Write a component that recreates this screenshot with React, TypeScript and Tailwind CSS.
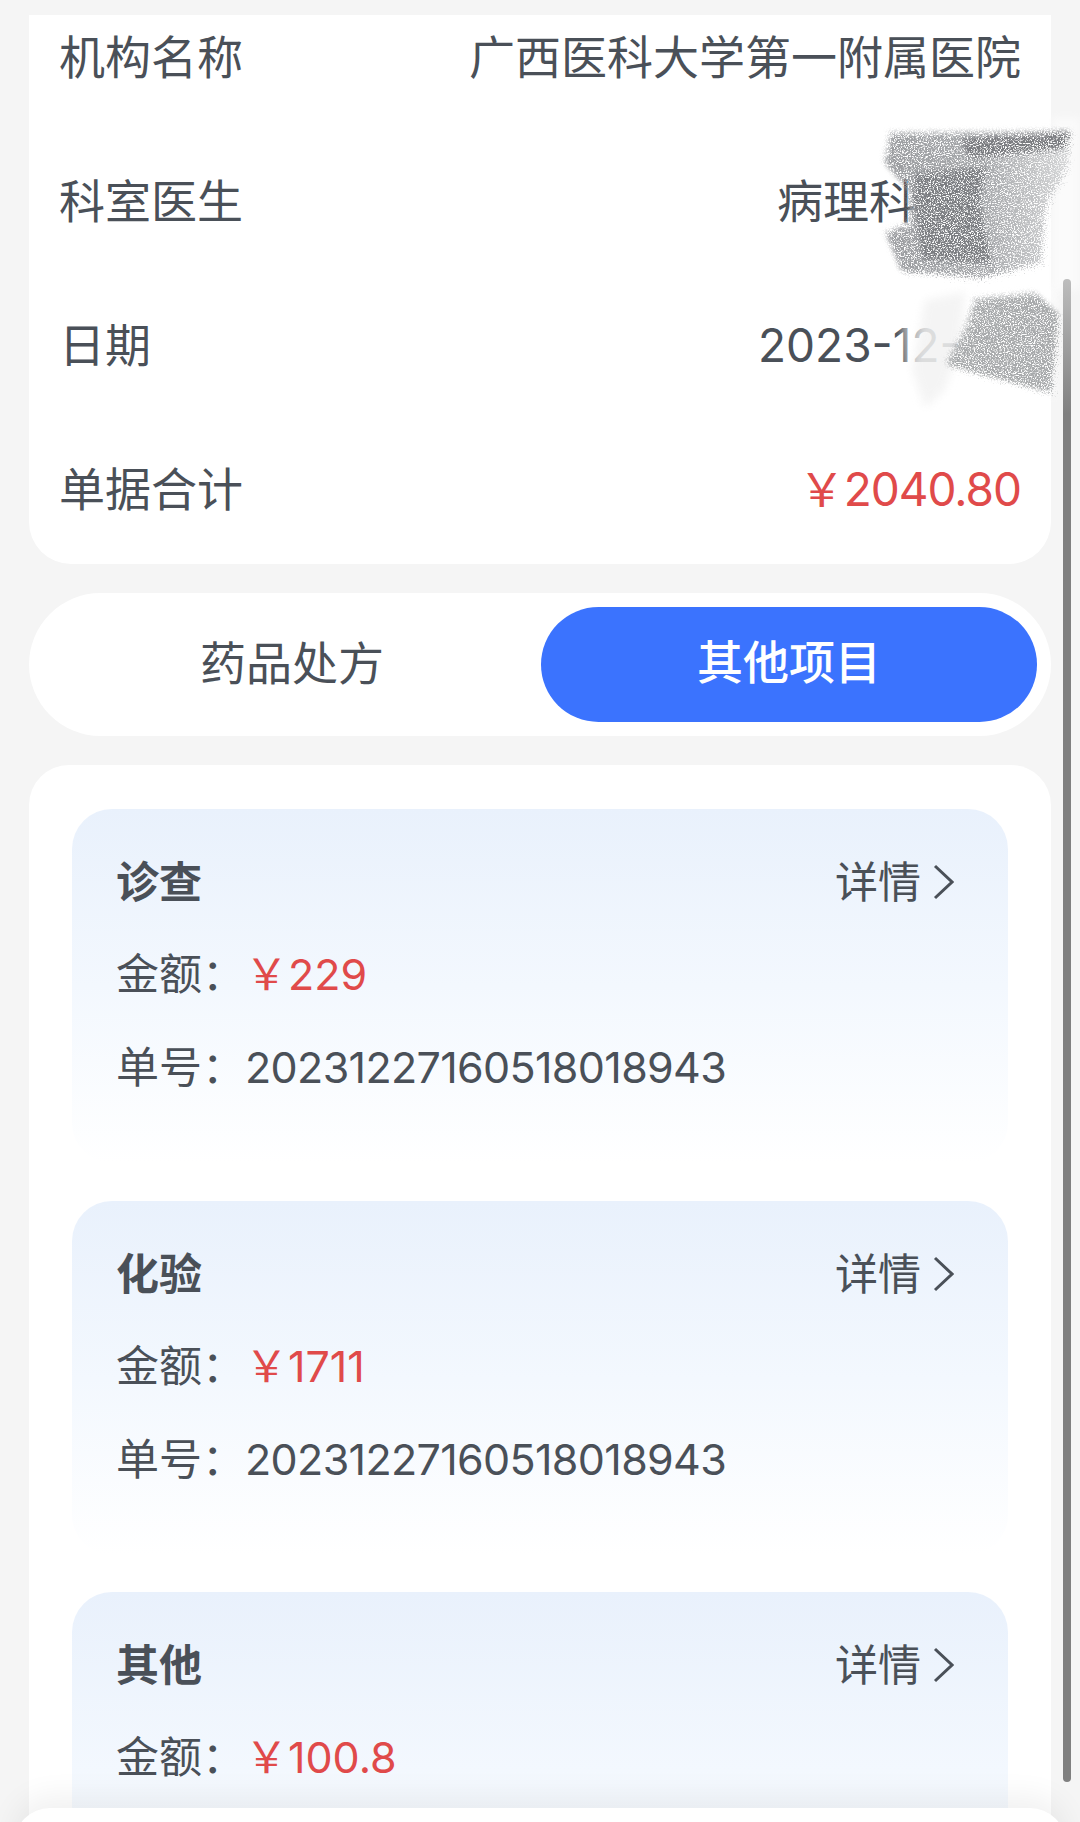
const infoRows = [
  { label: '机构名称', value: '广西医科大学第一附属医院' },
  { label: '科室医生', value: '病理科', valueClass: 'w-[244px]' },
  { label: '日期', value: '2023-12-', valueClass: 'w-[263px]' },
]

const items = [
  { title: '诊查', amount: '229', number: '20231227160518018943' },
  { title: '化验', amount: '1711', number: '20231227160518018943' },
  { title: '其他', amount: '100.8' },
]

function Scribble() {
  return (
    <svg className="pointer-events-none absolute left-[860px] top-[110px]" width="220" height="320" viewBox="860 110 220 320">
      <defs>
        <linearGradient id="fade" x1="0" y1="0" x2="1" y2="0">
          <stop offset="0" stopColor="#9a9c9f" />
          <stop offset="0.55" stopColor="#a8aaad" />
          <stop offset="1" stopColor="#d6d7d8" />
        </linearGradient>
        <filter id="pencil" x="-10%" y="-10%" width="120%" height="120%">
          <feGaussianBlur in="SourceGraphic" stdDeviation="2" result="blurred" />
          <feTurbulence type="fractalNoise" baseFrequency="0.7 0.9" numOctaves="3" seed="7" result="grain" />
          <feDisplacementMap in="blurred" in2="grain" scale="18" result="rough" />
          <feColorMatrix in="grain" type="matrix" values="0 0 0 0 0  0 0 0 0 0  0 0 0 0 0  0 0 0 -5 3.4" result="mask" />
          <feComposite in="rough" in2="mask" operator="in" />
        </filter>
        <filter id="soft" x="-10%" y="-10%" width="120%" height="120%">
          <feGaussianBlur stdDeviation="4" />
        </filter>
      </defs>
      {/* erased patches under the pencil */}
      <polygon points="900,300 975,280 1058,285 1056,395 930,415 905,375" fill="#ffffff" opacity="0.55" filter="url(#soft)" />
      <polygon points="925,300 965,292 960,345 945,390 925,408 912,370" fill="#f0f0f0" opacity="0.7" filter="url(#soft)" />
      <polygon points="1052,118 1080,118 1080,290 1052,290" fill="#fbfbfb" filter="url(#soft)" />
      {/* pencil strokes */}
      <g filter="url(#pencil)">
        <polygon points="890,132 1070,130 1066,168 1045,205 1040,262 980,277 900,270 885,233 908,222 908,190 884,163" fill="url(#fade)" />
        <polygon points="960,137 1070,130 1062,147 967,157" fill="#7a7c80" />
        <polygon points="914,172 985,165 978,200 990,262 921,258 912,200" fill="#7c7e82" />
        <polygon points="975,298 1035,292 1058,313 1050,392 945,364 965,327" fill="#a8aaac" />
      </g>
    </svg>
  )
}

export default function App() {
  return (
    <div className="relative h-[1822px] overflow-hidden bg-[#f5f5f5] px-[29px] pt-[15px] font-['Inter','Noto_Sans_CJK_SC',sans-serif] text-[#4a5058]">
      <section className="flex h-[549px] flex-col gap-[84px] rounded-b-[42px] bg-white px-[30px] pt-[12px]">
        {infoRows.map((row) => (
          <div key={row.label} className="flex h-[60px] items-center justify-between text-[46px] leading-[60px]">
            <span>{row.label}</span>
            <span className={row.valueClass}>{row.value}</span>
          </div>
        ))}
        <div className="flex h-[60px] items-center justify-between text-[46px] leading-[60px]">
          <span>单据合计</span>
          <span className="tracking-[-1px] text-[#e04a4a]">￥2040.80</span>
        </div>
      </section>

      <div className="mt-[29px] flex h-[143px] items-center rounded-full bg-white p-[14px]">
        <div className="flex-1 pb-[4px] text-center text-[46px] leading-[60px]">药品处方</div>
        <div className="flex h-[115px] w-[496px] items-center justify-center rounded-full bg-[#3b73fe] pb-[4px] text-[46px] font-medium text-white">其他项目</div>
      </div>

      <section className="mt-[29px] flex flex-col gap-[37.5px] rounded-[40px] bg-white px-[43px] pt-[44px]">
        {items.map((item) => (
          <article key={item.title} className="h-[354px] shrink-0 rounded-[40px] bg-linear-to-b from-[#e9f1fc] via-[#f3f8fe] to-white px-[44px] pt-[45px] text-[43px] leading-[56px]">
            <div className="flex items-center justify-between">
              <h2 className="font-bold">{item.title}</h2>
              <span className="flex items-center gap-[12px] pr-[10px]">
                详情
                <svg width="21" height="36" viewBox="0 0 21 36" fill="none" stroke="#4a5058" strokeWidth="3">
                  <path d="M2 2 L19 18 L2 34" />
                </svg>
              </span>
            </div>
            <div className="mt-[36px] flex">
              <span>金额：</span>
              <span className="text-[#e04a4a]">￥{item.amount}</span>
            </div>
            {item.number && (
              <div className="mt-[37px] flex">
                <span>单号：</span>
                <span className="tracking-[-0.65px]">{item.number}</span>
              </div>
            )}
          </article>
        ))}
      </section>

      <Scribble />
      <div className="absolute left-[1063px] top-[279px] h-[1503px] w-[8px] rounded-full bg-linear-to-b from-[#bdbdbd] via-[#808080] via-[9%] to-[#808080]" />
      <div className="absolute left-[14px] top-[1808px] h-[60px] w-[1052px] rounded-t-[36px] bg-white shadow-[0_-12px_30px_rgba(0,0,0,0.06)]" />
    </div>
  )
}
